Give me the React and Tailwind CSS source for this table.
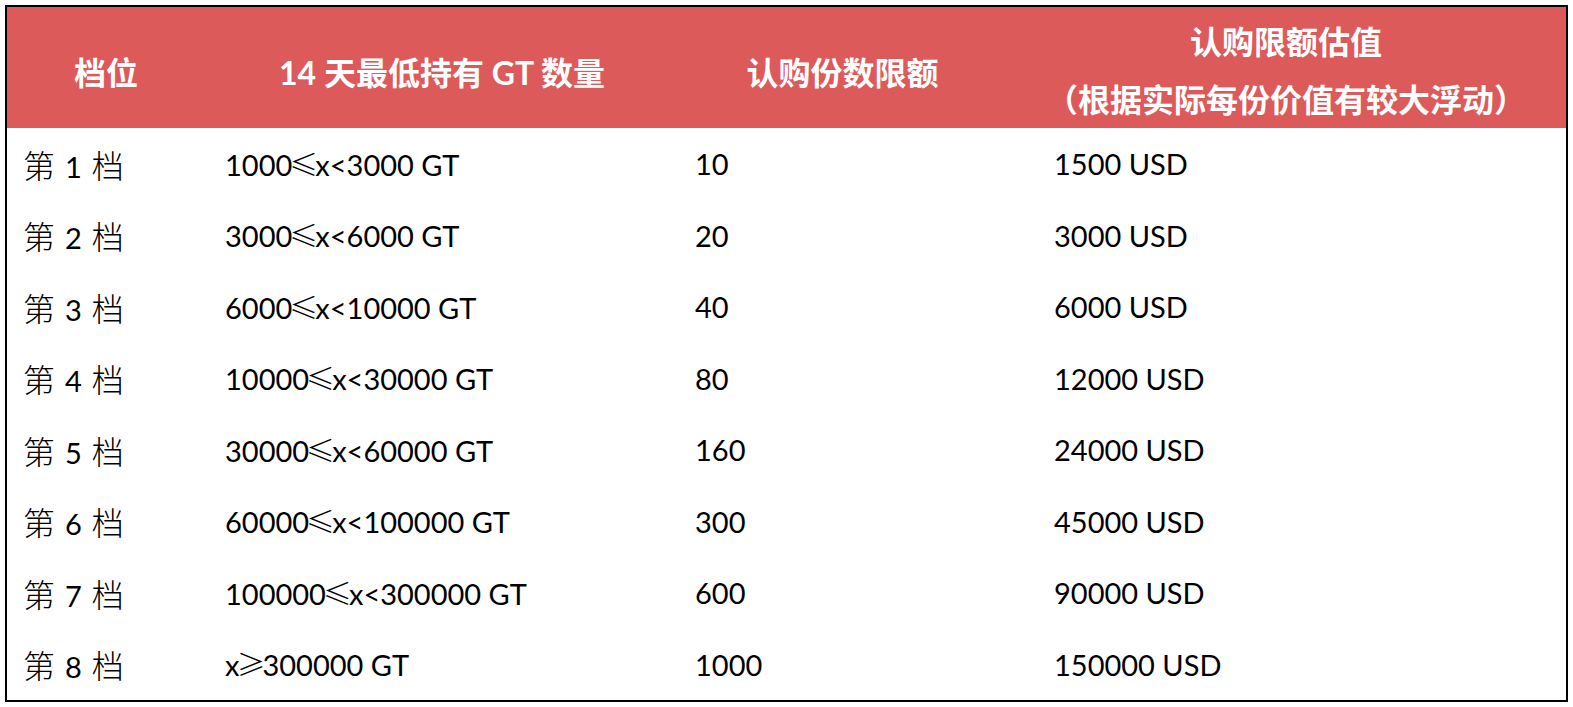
import React from "react";

const rows = [
  ["1", "1000", "≤", "x<3000 GT", "10", "1500 USD"],
  ["2", "3000", "≤", "x<6000 GT", "20", "3000 USD"],
  ["3", "6000", "≤", "x<10000 GT", "40", "6000 USD"],
  ["4", "10000", "≤", "x<30000 GT", "80", "12000 USD"],
  ["5", "30000", "≤", "x<60000 GT", "160", "24000 USD"],
  ["6", "60000", "≤", "x<100000 GT", "300", "45000 USD"],
  ["7", "100000", "≤", "x<300000 GT", "600", "90000 USD"],
  ["8", "x", "≥", "300000 GT", "1000", "150000 USD"],
];

const cjk = { fontFamily: '"Noto Sans CJK SC", sans-serif' };

export default function App() {
  return (
    <div className="w-[1573px] h-[707px] bg-white p-[5px]">
      <div
        className="w-[1563px] h-[697px] border-2 border-black flex flex-col text-black"
        style={{ fontFamily: 'Lato, "Noto Sans CJK SC", sans-serif' }}
      >
        <div className="h-[121px] bg-[#dd5a5b] text-white font-bold text-[32px] grid grid-cols-[198px_474px_327px_560px] items-center">
          <div className="flex justify-center pt-[10px]">档位</div>
          <div className="flex justify-center pt-[10px]">14 天最低持有 GT 数量</div>
          <div className="flex justify-center pt-[10px]">认购份数限额</div>
          <div className="flex flex-col items-center gap-[20px] pt-[6px] leading-[38px]">
            <div>认购限额估值</div>
            <div>（根据实际每份价值有较大浮动）</div>
          </div>
        </div>
        <div className="flex-1 grid grid-rows-8">
          {rows.map((r) => (
            <div
              key={r[0]}
              className="grid grid-cols-[198px_474px_327px_560px] items-center text-[29px]"
            >
              <div className="pl-[16px]">
                <span className="font-light text-[32px]" style={cjk}>第</span>
                <span className="px-[10px]">{r[0]}</span>
                <span className="font-light text-[32px]" style={cjk}>档</span>
              </div>
              <div className="pl-[20px]">
                {r[1]}
                <span className="font-light text-[29px] mx-[-3px]" style={cjk}>{r[2]}</span>
                {r[3]}
              </div>
              <div className="pl-[16px]">{r[4]}</div>
              <div className="pl-[48px]">{r[5]}</div>
            </div>
          ))}
        </div>
      </div>
    </div>
  );
}
